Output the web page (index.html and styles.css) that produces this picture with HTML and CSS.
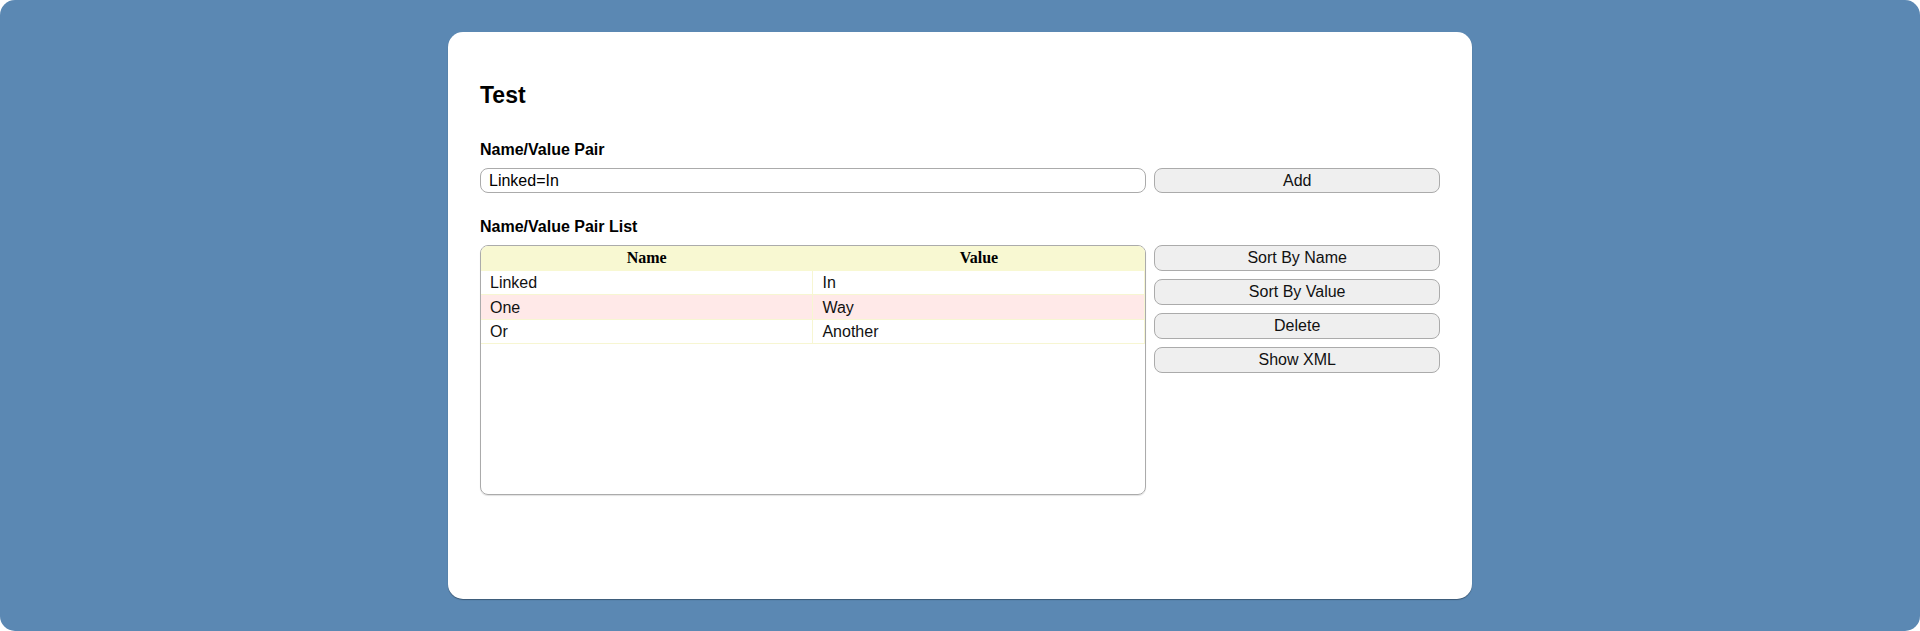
FILE: index.html
```html
<!DOCTYPE html>
<html>
<head>
<meta charset="utf-8">
<title>Test</title>
<link rel="stylesheet" href="styles.css">
</head>
<body>
<div class="frame">
  <div class="card">
    <h1 class="title">Test</h1>
    <div class="label">Name/Value Pair</div>
    <div class="row">
      <input class="field" type="text" value="Linked=In">
      <button class="btn btn-add">Add</button>
    </div>
    <div class="label label-list">Name/Value Pair List</div>
    <div class="row">
      <div class="list-box">
        <table class="pairs">
          <thead>
            <tr><th>Name</th><th>Value</th></tr>
          </thead>
          <tbody>
            <tr><td>Linked</td><td>In</td></tr>
            <tr class="selected"><td>One</td><td>Way</td></tr>
            <tr><td>Or</td><td>Another</td></tr>
          </tbody>
        </table>
      </div>
      <div class="actions">
        <button class="btn">Sort By Name</button>
        <button class="btn">Sort By Value</button>
        <button class="btn">Delete</button>
        <button class="btn">Show XML</button>
      </div>
    </div>
  </div>
</div>
</body>
</html>
```

FILE: styles.css
```css
html, body {
  margin: 0;
  padding: 0;
  background: #ffffff;
}

body {
  font-family: "Liberation Sans", Arial, sans-serif;
  color: #000;
}

.frame {
  height: 631px;
  box-sizing: border-box;
  background: #5b88b3;
  border-radius: 15px;
  padding-top: 32px;
  display: flex;
  justify-content: center;
  align-items: flex-start;
}

.card {
  width: 1024px;
  height: 567px;
  box-sizing: border-box;
  background: #ffffff;
  border-radius: 15px;
  box-shadow: 0 1px 1px rgba(0, 0, 0, 0.35);
  padding: 32px;
}

.title {
  margin: 19px 0 0;
  font-size: 23px;
  line-height: 25px;
  font-weight: bold;
}

.label {
  margin: 33px 0 9px;
  font-size: 16px;
  line-height: 18px;
  font-weight: bold;
}

.label-list {
  margin-top: 25px;
}

.row {
  display: grid;
  grid-template-columns: 7fr 3fr;
  column-gap: 8px;
  align-items: start;
}

.field {
  height: 25px;
  box-sizing: border-box;
  margin: 0;
  border: 1px solid #ababab;
  border-radius: 8px;
  padding: 0 8px;
  font: 16px "Liberation Sans", Arial, sans-serif;
  color: #000;
  outline: none;
}

.btn {
  height: 25px;
  box-sizing: border-box;
  margin: 0;
  padding: 0 8px;
  border: 1px solid #ababab;
  border-radius: 8px;
  background: #efefef;
  font: 16px "Liberation Sans", Arial, sans-serif;
  color: #111;
  text-align: center;
}

.actions {
  display: flex;
  flex-direction: column;
  gap: 8px;
}

.actions .btn {
  height: 26px;
}

.list-box {
  height: 250px;
  box-sizing: border-box;
  border: 1px solid #ababab;
  border-radius: 8px;
  overflow: hidden;
  box-shadow: 0 1px 1px rgba(0, 0, 0, 0.12);
}

.pairs {
  width: 100%;
  border-collapse: collapse;
  table-layout: fixed;
}

.pairs th {
  height: 22.5px;
  padding: 1px 0 0;
  background: #f8f8d2;
  font: bold 16px "Liberation Serif", "Times New Roman", serif;
  text-align: center;
  border: 1px solid #f8f8d2;
  border-top: 0;
}

.pairs td {
  height: 21.5px;
  padding: 2px 9px 0;
  border: 1px solid #f7f6d2;
  font-size: 16px;
  line-height: 18px;
  color: #111;
}

.pairs tr > :first-child {
  border-left: 0;
}

.pairs .selected td {
  background: #ffe9e8;
}
```
